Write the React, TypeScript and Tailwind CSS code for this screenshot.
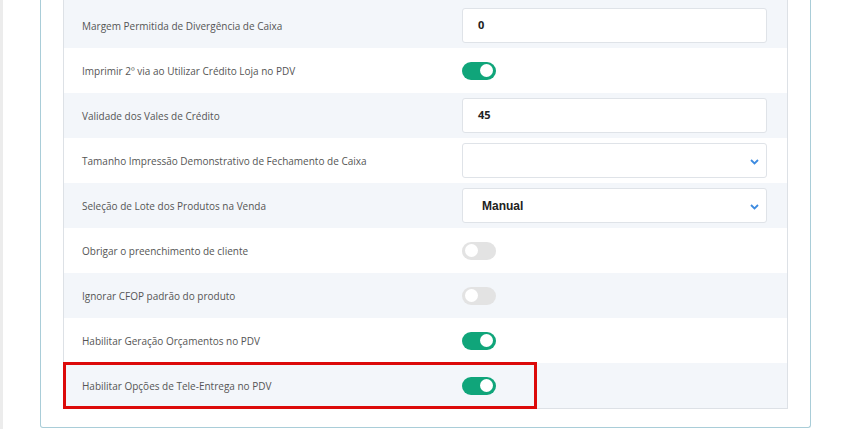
import React from 'react';

type Row =
  | { label: string; kind: 'input'; value: string }
  | { label: string; kind: 'select'; value: string }
  | { label: string; kind: 'toggle'; on: boolean; disabled?: boolean };

const rows: Row[] = [
  { label: 'Margem Permitida de Divergência de Caixa', kind: 'input', value: '0' },
  { label: 'Imprimir 2º via ao Utilizar Crédito Loja no PDV', kind: 'toggle', on: true },
  { label: 'Validade dos Vales de Crédito', kind: 'input', value: '45' },
  { label: 'Tamanho Impressão Demonstrativo de Fechamento de Caixa', kind: 'select', value: '' },
  { label: 'Seleção de Lote dos Produtos na Venda', kind: 'select', value: 'Manual' },
  { label: 'Obrigar o preenchimento de cliente', kind: 'toggle', on: false },
  { label: 'Ignorar CFOP padrão do produto', kind: 'toggle', on: false },
  { label: 'Habilitar Geração Orçamentos no PDV', kind: 'toggle', on: true },
  { label: 'Habilitar Opções de Tele-Entrega no PDV', kind: 'toggle', on: true },
];

function Toggle({ on }: { on: boolean }) {
  return (
    <div
      className={
        'w-[34px] h-[18px] rounded-full flex items-center px-[3px] ' +
        (on ? 'bg-[#10a57a] justify-end' : 'bg-[#e3e3e3] justify-start')
      }
    >
      <div className="w-[13px] h-[13px] rounded-full bg-white" />
    </div>
  );
}

function Chevron() {
  return (
    <svg width="9" height="6" viewBox="0 0 9 6" className="absolute right-[7px] top-[15px]">
      <path d="M1 1l3.5 3.5L8 1" fill="none" stroke="#3d8be0" strokeWidth="1.8" />
    </svg>
  );
}

export default function App() {
  return (
    <div className="flex w-[846px] h-[429px] bg-white overflow-hidden font-['Open_Sans',sans-serif]">
      <div className="w-[3px] bg-[#ececec]" />
      <div className="ml-[37px] w-[771px] h-[428px] border border-t-0 border-[#a9cdd8] rounded-b-[3px] px-[22px] pb-[18px]">
        <div className="border border-t-0 border-[#dde1e6]">
          <div className="h-[3px] bg-[#f3f6fa]" />
          {rows.map((row, i) => (
            <div
              key={row.label}
              className={
                'relative h-[45px] flex items-center ' + (i % 2 === 0 ? 'bg-[#f3f6fa]' : 'bg-white')
              }
            >
              <div className="w-[398px] pl-[18px] pt-[2px] text-[10px] text-[#555]">{row.label}</div>
              {row.kind === 'toggle' && <Toggle on={row.on} />}
              {row.kind === 'input' && (
                <div className="w-[305px] h-[35px] bg-white border border-[#dfe3e8] rounded-[3px] flex items-center pl-[15px] text-[11px] font-bold text-[#222]">
                  {row.value}
                </div>
              )}
              {row.kind === 'select' && (
                <div className="relative w-[305px] h-[35px] bg-white border border-[#dfe3e8] rounded-[3px] flex items-center pl-[19px] text-[12px] font-bold text-[#222] font-['Liberation_Sans',sans-serif]">
                  {row.value}
                  <Chevron />
                </div>
              )}
              {i === rows.length - 1 && (
                <div className="absolute -left-[1px] -top-[1px] w-[474px] h-[47px] border-[3px] border-[#dc0a0a]" />
              )}
            </div>
          ))}
        </div>
      </div>
    </div>
  );
}
